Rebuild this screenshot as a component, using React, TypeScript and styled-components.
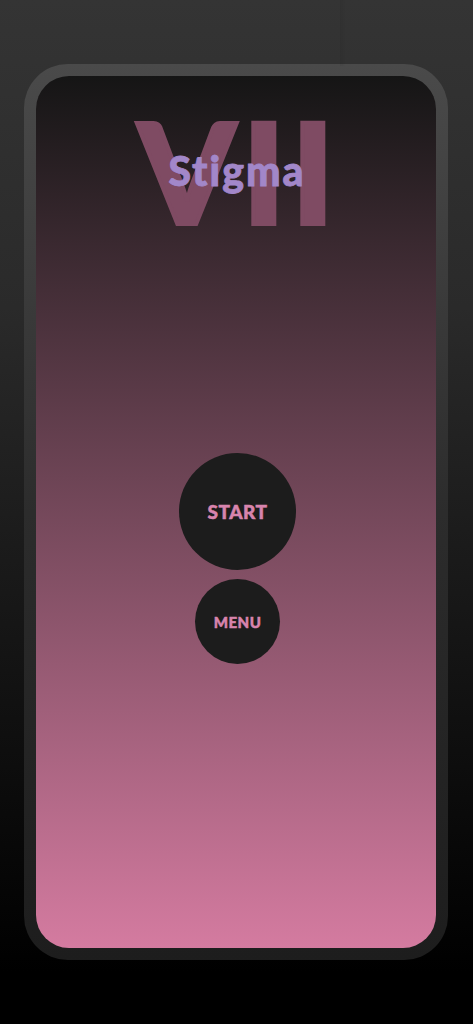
import React from "react";
import styled, { createGlobalStyle } from "styled-components";

const Global = createGlobalStyle`
  html, body {
    margin: 0;
    padding: 0;
    height: 1024px;
    overflow: hidden;
  }
  body {
    background: linear-gradient(to bottom, #343434 0%, #2a2a2a 30%, #000000 95%);
    font-family: "Lato", "Liberation Sans", sans-serif;
  }
`;

const Page = styled.div`
  position: relative;
  width: 473px;
  height: 1024px;
  padding: 64px 25px 0 24px;
  box-sizing: border-box;
`;

const Seam = styled.div`
  position: absolute;
  top: 0;
  left: 340px;
  width: 6px;
  height: 66px;
  background: linear-gradient(to right, rgba(0,0,0,0.06), rgba(0,0,0,0));
`;

const Frame = styled.div`
  width: 424px;
  height: 896px;
  box-sizing: border-box;
  padding: 12px;
  border-radius: 44px;
  background: linear-gradient(to bottom, #4a4a4a 0%, #2c2c2c 50%, #1d1d1d 100%);
`;

const Screen = styled.div`
  width: 100%;
  height: 100%;
  border-radius: 33px;
  overflow: hidden;
  background: linear-gradient(to bottom, #151515 0%, #d47ba0 100%);
  display: flex;
  flex-direction: column;
  align-items: center;
`;

const TitleBlock = styled.div`
  position: relative;
  margin-top: 42px;
  height: 106px;
  width: 100%;
  display: flex;
  justify-content: center;
`;

const Numeral = styled.div`
  font-family: "Lato", sans-serif;
  font-weight: 900;
  font-size: 139px;
  line-height: 106px;
  height: 106px;
  letter-spacing: 7px;
  color: #7f4b63;
  -webkit-text-stroke: 4px #7f4b63;
  margin-left: 7px;
`;

const Title = styled.div`
  position: absolute;
  top: 29px;
  left: 0;
  right: 0;
  padding-left: 2px;
  text-align: center;
  font-family: "Lato", sans-serif;
  font-weight: 900;
  font-size: 41px;
  line-height: 48px;
  letter-spacing: 2px;
  color: #a287c9;
  -webkit-text-stroke: 0.8px #a287c9;
`;

const Buttons = styled.div`
  margin-top: 229px;
  margin-left: 3px;
  display: flex;
  flex-direction: column;
  align-items: center;
  gap: 9px;
`;

const Circle = styled.button<{ $size: number; $font: number }>`
  width: ${(p) => p.$size}px;
  height: ${(p) => p.$size}px;
  border-radius: 50%;
  border: none;
  padding: 0;
  background: #1c1c1c;
  color: #d884ad;
  font-family: "Lato", sans-serif;
  font-weight: 900;
  font-size: ${(p) => p.$font}px;
  letter-spacing: 0.5px;
  -webkit-text-stroke: 0.5px #d884ad;
  display: flex;
  align-items: center;
  justify-content: center;
  cursor: pointer;
`;

export default function App() {
  return (
    <>
      <Global />
      <Page>
        <Seam />
        <Frame>
          <Screen>
            <TitleBlock>
              <Numeral>VII</Numeral>
              <Title>Stigma</Title>
            </TitleBlock>
            <Buttons>
              <Circle $size={117} $font={19}>START</Circle>
              <Circle $size={85} $font={15}>MENU</Circle>
            </Buttons>
          </Screen>
        </Frame>
      </Page>
    </>
  );
}
